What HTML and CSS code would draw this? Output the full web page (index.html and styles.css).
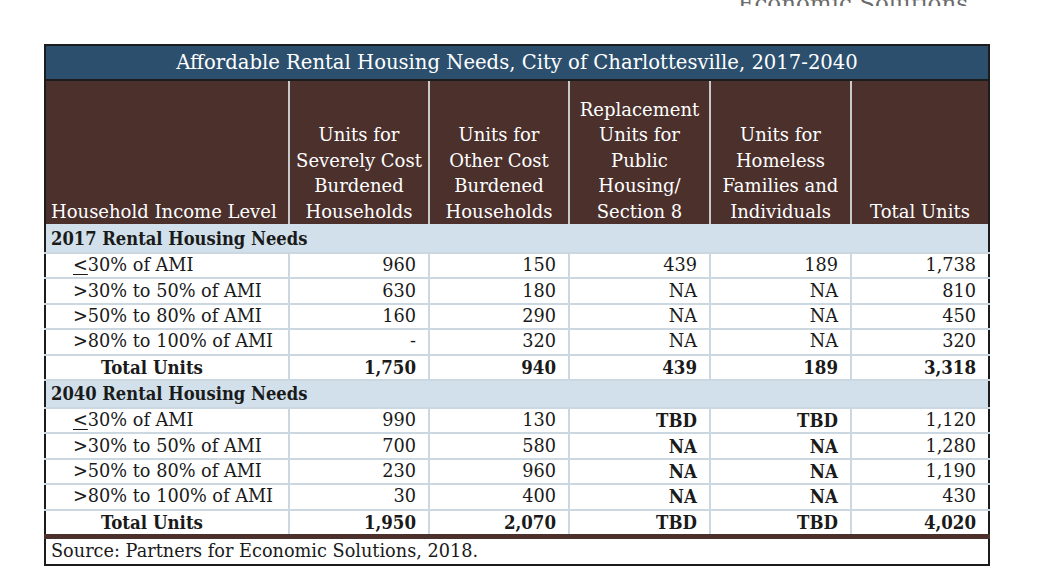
FILE: index.html
```html
<!DOCTYPE html>
<html lang="en">
<head>
  <meta charset="UTF-8">
  <meta name="viewport" content="width=device-width, initial-scale=1.0">
  <title>Affordable Rental Housing Needs, City of Charlottesville, 2017-2040</title>
  <link rel="stylesheet" href="styles.css">
</head>
<body>
  <div class="page-head">Economic Solutions</div>

  <table class="needs">
    <colgroup>
      <col class="c-label">
      <col class="c-num">
      <col class="c-num">
      <col class="c-wide">
      <col class="c-wide">
      <col class="c-last">
    </colgroup>
    <thead>
      <tr class="title-row">
        <th colspan="6">Affordable Rental Housing Needs, City of Charlottesville, 2017-2040</th>
      </tr>
      <tr class="head-row">
        <th class="label-head">Household Income Level</th>
        <th>Units for<br>Severely Cost<br>Burdened<br>Households</th>
        <th>Units for<br>Other Cost<br>Burdened<br>Households</th>
        <th>Replacement<br>Units for<br>Public<br>Housing/<br>Section 8</th>
        <th>Units for<br>Homeless<br>Families and<br>Individuals</th>
        <th>Total Units</th>
      </tr>
    </thead>
    <tbody>
      <tr class="section-row first"><td colspan="6">2017 Rental Housing Needs</td></tr>
      <tr><td class="lvl"><u>&lt;</u>30% of AMI</td><td>960</td><td>150</td><td>439</td><td>189</td><td>1,738</td></tr>
      <tr><td class="lvl">&gt;30% to 50% of AMI</td><td>630</td><td>180</td><td>NA</td><td>NA</td><td>810</td></tr>
      <tr><td class="lvl">&gt;50% to 80% of AMI</td><td>160</td><td>290</td><td>NA</td><td>NA</td><td>450</td></tr>
      <tr><td class="lvl">&gt;80% to 100% of AMI</td><td>-</td><td>320</td><td>NA</td><td>NA</td><td>320</td></tr>
      <tr class="total-row"><td class="lvl">Total Units</td><td>1,750</td><td>940</td><td>439</td><td>189</td><td>3,318</td></tr>

      <tr class="section-row"><td colspan="6">2040 Rental Housing Needs</td></tr>
      <tr><td class="lvl"><u>&lt;</u>30% of AMI</td><td>990</td><td>130</td><td class="b">TBD</td><td class="b">TBD</td><td>1,120</td></tr>
      <tr><td class="lvl">&gt;30% to 50% of AMI</td><td>700</td><td>580</td><td class="b">NA</td><td class="b">NA</td><td>1,280</td></tr>
      <tr><td class="lvl">&gt;50% to 80% of AMI</td><td>230</td><td>960</td><td class="b">NA</td><td class="b">NA</td><td>1,190</td></tr>
      <tr><td class="lvl">&gt;80% to 100% of AMI</td><td>30</td><td>400</td><td class="b">NA</td><td class="b">NA</td><td>430</td></tr>
      <tr class="total-row last"><td class="lvl">Total Units</td><td>1,950</td><td>2,070</td><td>TBD</td><td>TBD</td><td>4,020</td></tr>
    </tbody>
    <tfoot>
      <tr class="source-row"><td colspan="6">Source: Partners for Economic Solutions, 2018.</td></tr>
    </tfoot>
  </table>
</body>
</html>
```

FILE: styles.css
```css
body {
  margin: 0;
  background-color: #ffffff;
  color: #1a1a1a;
  font-family: "DejaVu Serif", serif;
}
.page-head {
  height: 6px;
  overflow: hidden;
  width: 968px;
  text-align: right;
  color: #6a6a6a;
  font-size: 23px;
  line-height: 6px;
}
.needs {
  margin: 38px 0 0 44px;
  width: 944px;
  table-layout: fixed;
  border-collapse: collapse;
  border: 2px solid #1c1c1c;
  font-size: 17.7px;
}
.c-label { width: 244px; }
.c-num { width: 140px; }
.c-wide { width: 141px; }
.c-last { width: 138px; }

.needs th,
.needs td {
  padding: 0 12px 0 0;
}

/* title + column heads */
.needs .title-row th {
  height: 33px;
  background-color: #2c4f6e;
  color: #ffffff;
  font-weight: normal;
  font-size: 19.6px;
  text-align: center;
  padding: 0;
  border-bottom: 2px solid #1c1c1c;
}
.needs .head-row th {
  height: 143px;
  background-color: #4b302c;
  color: #ffffff;
  font-weight: normal;
  font-size: 18px;
  vertical-align: bottom;
  text-align: center;
  line-height: 25.5px;
  padding: 0;
  border-left: 2px solid #c9c9c9;
}
.needs .head-row th.label-head {
  text-align: left;
  padding-left: 5px;
  border-left: none;
}

/* body rows */
.needs tbody td {
  height: 23.4px;
  text-align: right;
  line-height: 23px;
  border-left: 2px solid #cbd8e2;
  border-bottom: 2px solid #cbd8e2;
}
.needs tbody td.lvl {
  text-align: left;
  padding-left: 27px;
  border-left: none;
}
.needs .section-row td {
  height: 26px;
  background-color: #d1e0ea;
  font-family: "DejaVu Serif Condensed", "DejaVu Serif", serif;
  font-stretch: condensed;
  font-weight: bold;
  font-size: 18.2px;
  text-align: left;
  padding-left: 5px;
  border-left: none;
}
.needs .section-row.first td {
  height: 28px;
}
.needs .total-row td,
.needs td.b {
  font-family: "DejaVu Serif Condensed", "DejaVu Serif", serif;
  font-stretch: condensed;
  font-weight: bold;
  font-size: 18.5px;
}
.needs .total-row td.lvl {
  padding-left: 55px;
}
.needs .total-row.last td {
  border-bottom: 5px solid #4b302c;
}
.needs .source-row td {
  height: 25px;
  padding-left: 5px;
  text-align: left;
}
u {
  text-underline-offset: 3px;
}
```
